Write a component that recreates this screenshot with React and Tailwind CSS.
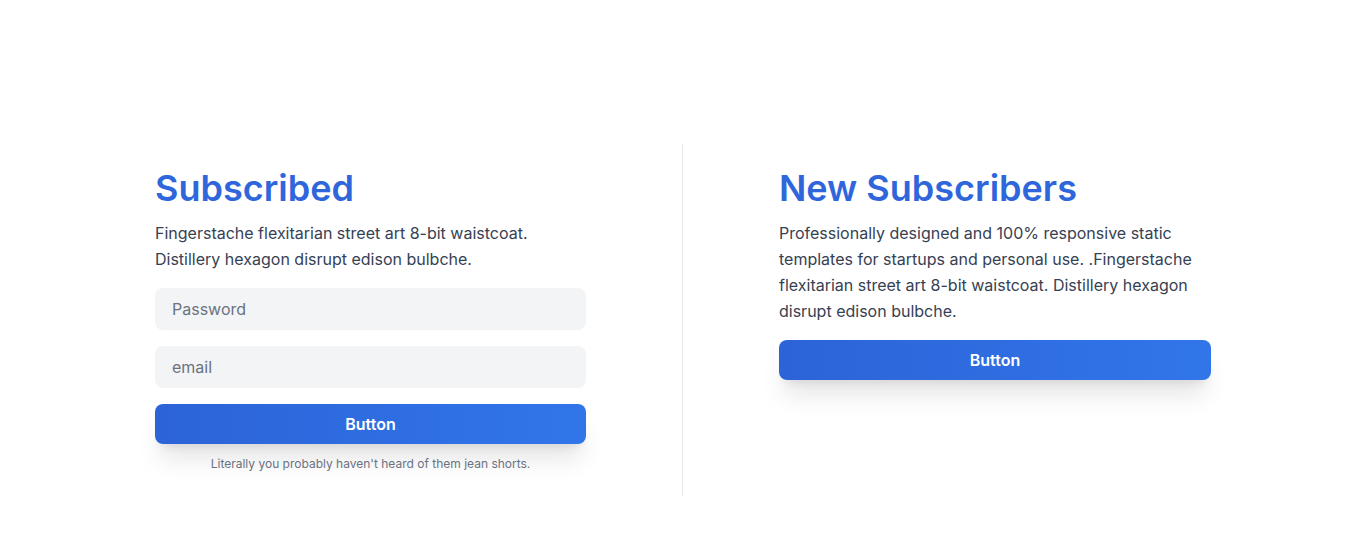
import React from 'react';

const App = () => {
  return (
    <section className="bg-white min-h-screen font-['Inter','Noto_Sans',sans-serif] text-gray-700">
      <div className="container mx-auto px-4 pt-36 pb-14">
        <div className="flex">
          {/* left column */}
          <div className="w-1/2 px-24 py-6 border-r border-gray-200">
            <h1 className="text-4xl font-semibold text-[#2f66dc] mb-3">Subscribed</h1>
            <p className="leading-relaxed mb-4">
              Fingerstache flexitarian street art 8-bit waistcoat. Distillery hexagon disrupt edison bulbche.
            </p>
            <input
              type="password"
              placeholder="Password"
              className="w-full h-[42px] bg-gray-100 border border-transparent rounded-lg px-4 mb-4 text-base outline-none placeholder:text-gray-500"
            />
            <input
              type="email"
              placeholder="email"
              className="w-full h-[42px] bg-gray-100 border border-transparent rounded-lg px-4 mb-4 text-base outline-none placeholder:text-gray-500"
            />
            <button className="w-full h-10 rounded-lg text-white font-semibold bg-gradient-to-r from-[#2c63d8] to-[#3176e9] shadow-xl">
              Button
            </button>
            <p className="text-xs text-gray-500 text-center mt-3">Literally you probably haven't heard of them jean shorts.</p>
          </div>

          {/* right column */}
          <div className="w-1/2 px-24 py-6">
            <h1 className="text-4xl font-semibold text-[#2f66dc] mb-3">New Subscribers</h1>
            <p className="leading-relaxed mb-4">
              Professionally designed and 100% responsive static templates for startups and personal use. .Fingerstache flexitarian street art 8-bit waistcoat. Distillery hexagon disrupt edison bulbche.
            </p>
            <button className="w-full h-10 rounded-lg text-white font-semibold bg-gradient-to-r from-[#2c63d8] to-[#3176e9] shadow-xl">
              Button
            </button>
          </div>
        </div>
      </div>
    </section>
  );
};

export default App;
